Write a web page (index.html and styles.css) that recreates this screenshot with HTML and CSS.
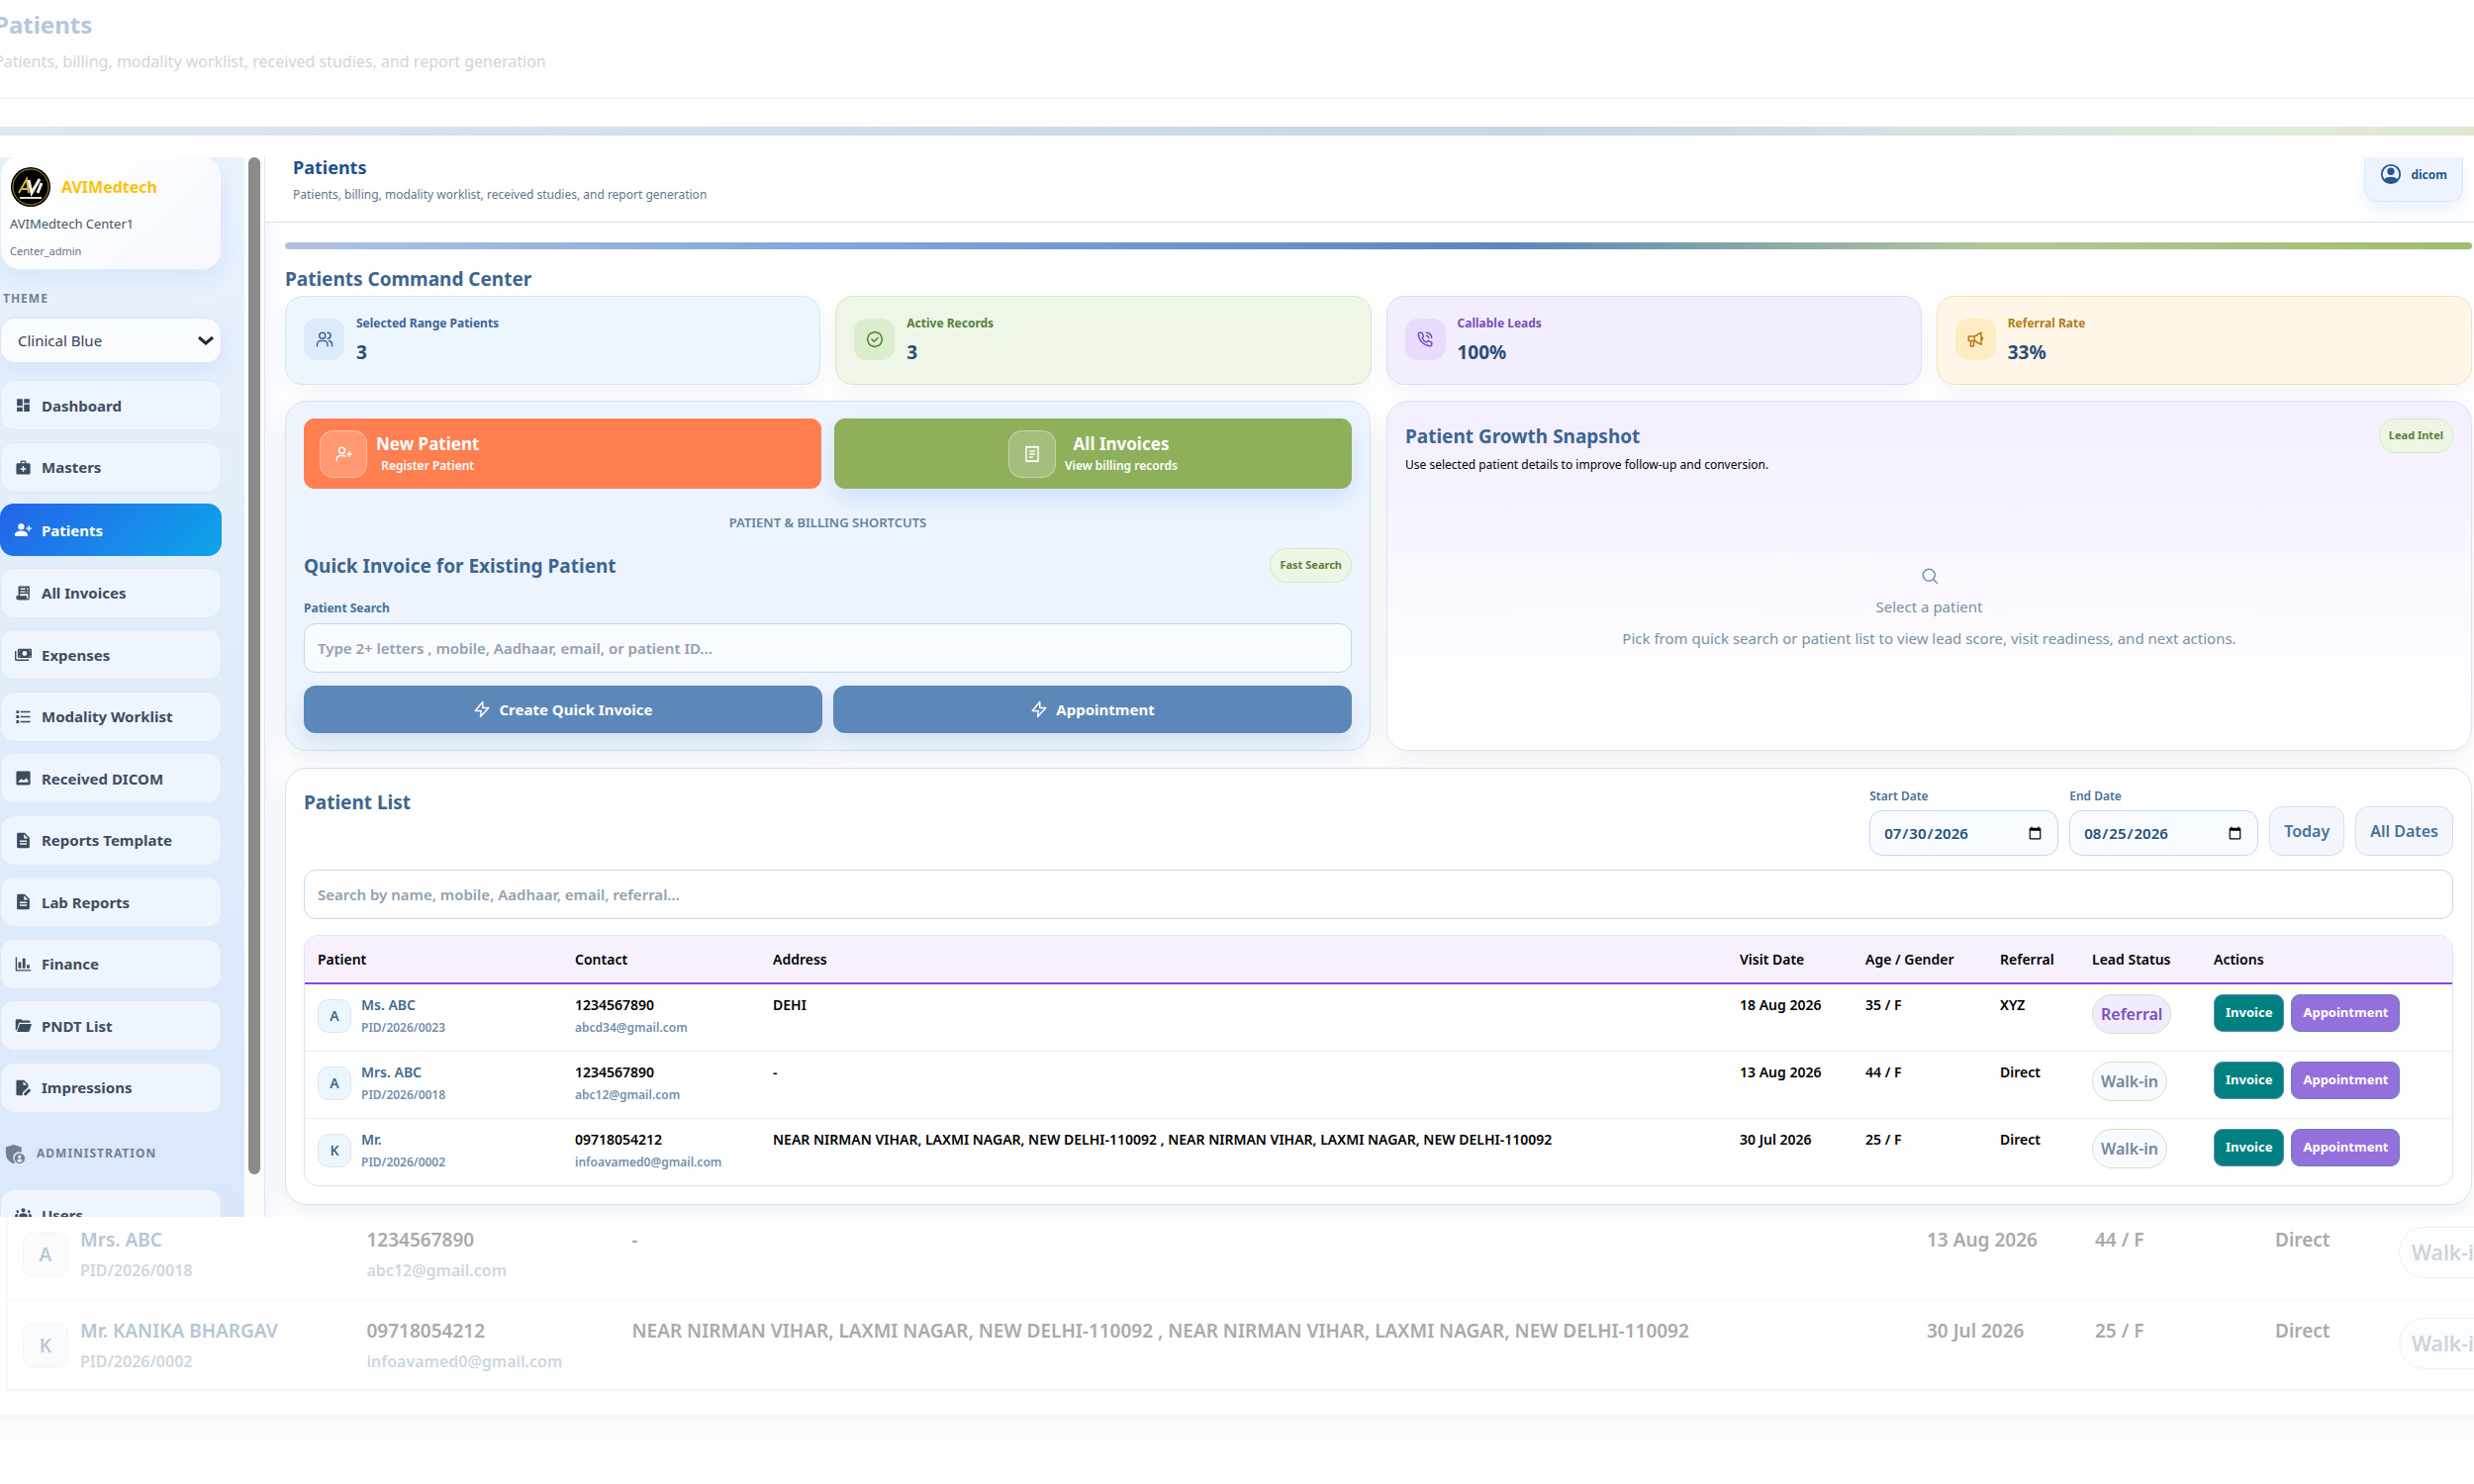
FILE: index.html
```html
<!DOCTYPE html>
<html lang="en">
<head>
    <meta charset="UTF-8">
    <meta name="viewport" content="width=device-width, initial-scale=1.0">
    <title>Patients - AVIMedtech</title>
    <link rel="stylesheet" href="styles.css">
</head>
<body>
    <!-- Icon sprite -->
    <svg class="sprite" aria-hidden="true">
        <symbol id="i-dashboard" viewBox="0 0 24 24"><path fill="currentColor" d="M3 13h8V3H3v10zm0 8h8v-6H3v6zm10 0h8V11h-8v10zm0-18v6h8V3h-8z"/></symbol>
        <symbol id="i-masters" viewBox="0 0 24 24"><path fill="currentColor" d="M20 6h-4V4c0-1.1-.9-2-2-2h-4c-1.1 0-2 .9-2 2v2H4c-1.1 0-2 .9-2 2v12c0 1.1.9 2 2 2h16c1.1 0 2-.9 2-2V8c0-1.1-.9-2-2-2zM10 4h4v2h-4V4zm6 11h-3v3h-2v-3H8v-2h3v-3h2v3h3v2z"/></symbol>
        <symbol id="i-patients" viewBox="0 0 24 24"><path fill="currentColor" d="M9 12a4.500 4.500 0 1 0 0-9 4.500 4.500 0 0 0 0 9zm0 1.500c-3.500 0-9 1.700-9 5V21h18v-2.500c0-3.300-5.500-5-9-5zM21 9V6h-2v3h-3v2h3v3h2v-3h3V9z"/></symbol>
        <symbol id="i-invoices" viewBox="0 0 24 24"><path fill="currentColor" fill-rule="evenodd" d="M5 2h16v17a3 3 0 0 1-3 3H5a3 3 0 0 1-3-3v-3h3V2zm3 3v2h7V5H8zm9 0v2h2V5h-2zm-9 4v2h7V9H8zm9 0v2h2V9h-2zM7 4v12h10v3a1 1 0 0 0 2 0V13H7z"/></symbol>
        <symbol id="i-expenses" viewBox="0 0 24 24"><path fill="currentColor" fill-rule="evenodd" d="M6 4h16a2 2 0 0 1 2 2v9a2 2 0 0 1-2 2H6a2 2 0 0 1-2-2V6a2 2 0 0 1 2-2zm8 3a3.500 3.500 0 1 0 0 7 3.500 3.500 0 0 0 0-7zM6 6v2l2-2H6zm16 0h-2l2 2V6zM6 15h2l-2-2v2zm16 0v-2l-2 2h2zM0 7h2v12h18v2H2a2 2 0 0 1-2-2V7z"/></symbol>
        <symbol id="i-worklist" viewBox="0 0 24 24"><path fill="currentColor" d="M2 3h4v4H2zM2 10h4v4H2zM2 17h4v4H2zM8 4h14v2H8zM8 11h14v2H8zM8 18h14v2H8z"/></symbol>
        <symbol id="i-image" viewBox="0 0 24 24"><path fill="currentColor" fill-rule="evenodd" d="M4 2h16a2 2 0 0 1 2 2v16a2 2 0 0 1-2 2H4a2 2 0 0 1-2-2V4a2 2 0 0 1 2-2zm1 16h14v-3l-3-3-3 3-4-2-4 4v1z"/></symbol>
        <symbol id="i-report" viewBox="0 0 24 24"><path fill="currentColor" fill-rule="evenodd" d="M5 1h9l7 7v13a2 2 0 0 1-2 2H5a2 2 0 0 1-2-2V3a2 2 0 0 1 2-2zm8 2v6h6l-6-6zM7 12v2h10v-2H7zm0 4v2h10v-2H7z"/></symbol>
        <symbol id="i-finance" viewBox="0 0 24 24"><path fill="currentColor" d="M1 2h2v18h20v2H1zM5 9h4v9H5zM11 4h4v14h-4zM17 13h4v5h-4z"/></symbol>
        <symbol id="i-folder" viewBox="0 0 24 24"><path fill="currentColor" d="M1 19V5a2 2 0 0 1 2-2h6l2 2h9a2 2 0 0 1 2 2v1H6L3 18 1 19zm2 2 4-11h17l-3 9a2 2 0 0 1-2 2H3z"/></symbol>
        <symbol id="i-impressions" viewBox="0 0 24 24"><path fill="currentColor" fill-rule="evenodd" d="M4 1h9l6 6v4l-8 8v4H4a2 2 0 0 1-2-2V3a2 2 0 0 1 2-2zm8 2v5h5l-5-5zM13 20l7-7 3 3-7 7h-3v-3z"/></symbol>
        <symbol id="i-shield" viewBox="0 0 24 24"><path fill="currentColor" fill-rule="evenodd" d="M10 1 1 4v7c0 6 4 10 9 12l2-1a7 7 0 0 1 7-12V4l-9-3zm7 10a6 6 0 1 0 0 12 6 6 0 0 0 0-12zm0 2a2 2 0 1 1 0 4 2 2 0 0 1 0-4zm-3 7c0-3 6-3 6 0-1 2-5 2-6 0z"/></symbol>
        <symbol id="i-users" viewBox="0 0 24 24"><path fill="currentColor" d="M12 3a3 3 0 1 1 0 6 3 3 0 0 1 0-6zM4 6a2 2 0 1 1 0 4 2 2 0 0 1 0-4zm16 0a2 2 0 1 1 0 4 2 2 0 0 1 0-4zM6 20v-6c0-5 12-5 12 0v6H6zM0 20v-5c0-3 2-4 4-4v9H0zm24 0v-5c0-3-2-4-4-4v9h4z"/></symbol>
        <symbol id="i-account" viewBox="0 0 24 24"><path fill="currentColor" fill-rule="evenodd" d="M12 1a11 11 0 1 0 0 22 11 11 0 0 0 0-22zm0 2a9 9 0 0 1 7 14.500c-3-3.500-11-3.500-14 0A9 9 0 0 1 12 3zm0 2a4 4 0 1 0 0 8 4 4 0 0 0 0-8z"/></symbol>
        <symbol id="i-group" viewBox="0 0 24 24"><g fill="none" stroke="currentColor" stroke-width="2" stroke-linecap="round"><circle cx="9" cy="7" r="4"/><path d="M2 21v-2a5 5 0 0 1 5-5h4a5 5 0 0 1 5 5v2M16 3a4 4 0 0 1 0 8M18 14a5 5 0 0 1 4 5v2"/></g></symbol>
        <symbol id="i-check" viewBox="0 0 24 24"><g fill="none" stroke="currentColor" stroke-width="2" stroke-linecap="round" stroke-linejoin="round"><path d="m12 2 3 1 3 1 2 2 1 3 1 3-1 3-1 3-2 2-3 1-3 1-3-1-3-1-2-2-1-3-1-3 1-3 1-3 2-2 3-1z"/><path d="m8 12 3 3 5-5"/></g></symbol>
        <symbol id="i-phone" viewBox="0 0 24 24"><g fill="none" stroke="currentColor" stroke-width="2" stroke-linecap="round" stroke-linejoin="round"><path d="M5 3h3l2 5-2 2a12 12 0 0 0 6 6l2-2 5 2v3a2 2 0 0 1-2 2A17 17 0 0 1 3 5a2 2 0 0 1 2-2z"/><path d="M14 7a4 4 0 0 1 3 3M14 3a8 8 0 0 1 7 7"/></g></symbol>
        <symbol id="i-horn" viewBox="0 0 24 24"><g fill="none" stroke="currentColor" stroke-width="2" stroke-linecap="round" stroke-linejoin="round"><path d="M3 8h8l9-5v16l-9-5H3zM11 8v6M6 14v6a1 1 0 0 0 2 1h2v-7M20 9a2 2 0 0 1 0 4"/></g></symbol>
        <symbol id="i-adduser" viewBox="0 0 24 24"><g fill="none" stroke="currentColor" stroke-width="2" stroke-linecap="round"><circle cx="10" cy="7" r="4"/><path d="M3 21v-2a5 5 0 0 1 5-5h4a5 5 0 0 1 3 1M20 9v6M17 12h6"/></g></symbol>
        <symbol id="i-bill" viewBox="0 0 24 24"><g fill="none" stroke="currentColor" stroke-width="2" stroke-linejoin="round"><path d="M4 2l2 1 2-1 2 1 2-1 2 1 2-1 2 1 2-1v20l-2-1-2 1-2-1-2 1-2-1-2 1-2-1-2 1z"/><path d="M8 8h8M8 12h8M8 16h5"/></g></symbol>
        <symbol id="i-bolt" viewBox="0 0 24 24"><path fill="none" stroke="currentColor" stroke-width="2" stroke-linejoin="round" d="M13 2 3 14h8l-1 8 11-12h-8z"/></symbol>
        <symbol id="i-search" viewBox="0 0 24 24"><g fill="none" stroke="currentColor" stroke-width="2" stroke-linecap="round"><circle cx="11" cy="11" r="8"/><path d="m17 17 5 5"/></g></symbol>
    </svg>

    <!-- Faded top strip -->
    <section class="backdrop backdrop-top" aria-hidden="true">
        <div class="backdrop-head">
            <p class="backdrop-title">Patients</p>
            <p class="backdrop-sub">Patients, billing, modality worklist, received studies, and report generation</p>
        </div>
        <div class="backdrop-bar"></div>
    </section>

    <div class="app">
        <aside class="sidebar">
            <div class="sidebar-body">
                <div class="brand">
                    <div class="brand-row">
                        <svg class="brand-logo" viewBox="0 0 42 42" aria-hidden="true">
                            <circle cx="21" cy="21" r="20" fill="#000"/>
                            <circle cx="21" cy="21" r="18" fill="none" stroke="#b8952e" stroke-width="1"/>
                            <path d="M9 27l8-14 2 14M12 23h7" fill="none" stroke="#d9ad3c" stroke-width="2"/>
                            <path d="M19 14l3 13 8-14M28 27l4-10" fill="none" stroke="#f4f1e6" stroke-width="3"/>
                            <path d="M10 32h22" stroke="#ddd" stroke-width="2"/>
                        </svg>
                        <strong class="brand-name">AVIMedtech</strong>
                    </div>
                    <p class="brand-center">AVIMedtech Center1</p>
                    <p class="brand-role">Center_admin</p>
                </div>

                <label class="theme-label" for="theme">THEME</label>
                <div class="select-wrap">
                    <select id="theme" class="theme-select">
                        <option>Clinical Blue</option>
                    </select>
                    <svg class="chevron" viewBox="0 0 16 10" aria-hidden="true"><path d="M1 2l7 6 7-6" fill="none" stroke="#1e293b" stroke-width="3"/></svg>
                </div>

                <nav class="nav">
                    <a class="nav-item" href="#"><svg><use href="#i-dashboard"/></svg>Dashboard</a>
                    <a class="nav-item" href="#"><svg><use href="#i-masters"/></svg>Masters</a>
                    <a class="nav-item active" href="#"><svg><use href="#i-patients"/></svg>Patients</a>
                    <a class="nav-item" href="#"><svg><use href="#i-invoices"/></svg>All Invoices</a>
                    <a class="nav-item" href="#"><svg><use href="#i-expenses"/></svg>Expenses</a>
                    <a class="nav-item" href="#"><svg><use href="#i-worklist"/></svg>Modality Worklist</a>
                    <a class="nav-item" href="#"><svg><use href="#i-image"/></svg>Received DICOM</a>
                    <a class="nav-item" href="#"><svg><use href="#i-report"/></svg>Reports Template</a>
                    <a class="nav-item" href="#"><svg><use href="#i-report"/></svg>Lab Reports</a>
                    <a class="nav-item" href="#"><svg><use href="#i-finance"/></svg>Finance</a>
                    <a class="nav-item" href="#"><svg><use href="#i-folder"/></svg>PNDT List</a>
                    <a class="nav-item" href="#"><svg><use href="#i-impressions"/></svg>Impressions</a>
                </nav>

                <div class="nav-admin">
                    <p class="nav-heading"><svg><use href="#i-shield"/></svg>ADMINISTRATION</p>
                    <a class="nav-item" href="#"><svg><use href="#i-users"/></svg>Users</a>
                </div>
            </div>
            <div class="scroll-track"><div class="scroll-thumb"></div></div>
        </aside>

        <div class="content">
            <header class="topbar">
                <div>
                    <h1>Patients</h1>
                    <p>Patients, billing, modality worklist, received studies, and report generation</p>
                </div>
                <button class="user-chip" type="button"><svg><use href="#i-account"/></svg>dicom</button>
            </header>

            <main>
                <div class="accent-bar"></div>
                <h2 class="page-title">Patients Command Center</h2>

                <section class="stats">
                    <article class="stat blue">
                        <span class="stat-icon"><svg><use href="#i-group"/></svg></span>
                        <div><p class="stat-label">Selected Range Patients</p><p class="stat-value">3</p></div>
                    </article>
                    <article class="stat green">
                        <span class="stat-icon"><svg><use href="#i-check"/></svg></span>
                        <div><p class="stat-label">Active Records</p><p class="stat-value">3</p></div>
                    </article>
                    <article class="stat purple">
                        <span class="stat-icon"><svg><use href="#i-phone"/></svg></span>
                        <div><p class="stat-label">Callable Leads</p><p class="stat-value">100%</p></div>
                    </article>
                    <article class="stat amber">
                        <span class="stat-icon"><svg><use href="#i-horn"/></svg></span>
                        <div><p class="stat-label">Referral Rate</p><p class="stat-value">33%</p></div>
                    </article>
                </section>

                <div class="panels">
                    <section class="panel quick">
                        <div class="shortcuts">
                            <button class="shortcut new" type="button">
                                <span class="shortcut-icon"><svg><use href="#i-adduser"/></svg></span>
                                <span class="shortcut-text"><b>New Patient</b><small>Register Patient</small></span>
                            </button>
                            <button class="shortcut invoices" type="button">
                                <span class="shortcut-icon"><svg><use href="#i-bill"/></svg></span>
                                <span class="shortcut-text"><b>All Invoices</b><small>View billing records</small></span>
                            </button>
                        </div>
                        <p class="shortcut-caption">PATIENT &amp; BILLING SHORTCUTS</p>
                        <div class="panel-head">
                            <h2>Quick Invoice for Existing Patient</h2>
                            <span class="tag">Fast Search</span>
                        </div>
                        <label class="field-label" for="patientSearch">Patient Search</label>
                        <input class="text-input" id="patientSearch" type="text" placeholder="Type 2+ letters , mobile, Aadhaar, email, or patient ID...">
                        <div class="quick-actions">
                            <button type="button"><svg><use href="#i-bolt"/></svg>Create Quick Invoice</button>
                            <button type="button"><svg><use href="#i-bolt"/></svg>Appointment</button>
                        </div>
                    </section>

                    <section class="panel growth">
                        <div class="panel-head">
                            <h2>Patient Growth Snapshot</h2>
                            <span class="tag">Lead Intel</span>
                        </div>
                        <p class="growth-sub">Use selected patient details to improve follow-up and conversion.</p>
                        <div class="empty">
                            <svg><use href="#i-search"/></svg>
                            <p>Select a patient</p>
                            <p>Pick from quick search or patient list to view lead score, visit readiness, and next actions.</p>
                        </div>
                    </section>
                </div>

                <section class="panel list">
                    <div class="list-head">
                        <h2>Patient List</h2>
                        <div class="filters">
                            <div class="date-field">
                                <label for="startDate">Start Date</label>
                                <input id="startDate" type="date" value="2026-07-30">
                            </div>
                            <div class="date-field">
                                <label for="endDate">End Date</label>
                                <input id="endDate" type="date" value="2026-08-25">
                            </div>
                            <button class="filter-btn" type="button">Today</button>
                            <button class="filter-btn" type="button">All Dates</button>
                        </div>
                    </div>
                    <input class="text-input" type="text" aria-label="Search patients" placeholder="Search by name, mobile, Aadhaar, email, referral...">
                    <div class="table-wrap">
                        <table class="patients">
                            <thead>
                                <tr>
                                    <th class="c-patient">Patient</th>
                                    <th class="c-contact">Contact</th>
                                    <th>Address</th>
                                    <th class="c-visit">Visit Date</th>
                                    <th class="c-age">Age / Gender</th>
                                    <th class="c-ref">Referral</th>
                                    <th class="c-lead">Lead Status</th>
                                    <th class="c-actions">Actions</th>
                                </tr>
                            </thead>
                            <tbody>
                                <tr>
                                    <td><div class="person"><span class="avatar">A</span><div><p class="name">Ms. ABC</p><p class="minor">PID/2026/0023</p></div></div></td>
                                    <td>1234567890<p class="minor">abcd34@gmail.com</p></td>
                                    <td>DEHI</td>
                                    <td>18 Aug 2026</td>
                                    <td>35 / F</td>
                                    <td>XYZ</td>
                                    <td><span class="status referral">Referral</span></td>
                                    <td><div class="actions"><button class="act invoice" type="button">Invoice</button><button class="act appointment" type="button">Appointment</button></div></td>
                                </tr>
                                <tr>
                                    <td><div class="person"><span class="avatar">A</span><div><p class="name">Mrs. ABC</p><p class="minor">PID/2026/0018</p></div></div></td>
                                    <td>1234567890<p class="minor">abc12@gmail.com</p></td>
                                    <td>-</td>
                                    <td>13 Aug 2026</td>
                                    <td>44 / F</td>
                                    <td>Direct</td>
                                    <td><span class="status">Walk-in</span></td>
                                    <td><div class="actions"><button class="act invoice" type="button">Invoice</button><button class="act appointment" type="button">Appointment</button></div></td>
                                </tr>
                                <tr>
                                    <td><div class="person"><span class="avatar">K</span><div><p class="name">Mr.</p><p class="minor">PID/2026/0002</p></div></div></td>
                                    <td>09718054212<p class="minor">infoavamed0@gmail.com</p></td>
                                    <td>NEAR NIRMAN VIHAR, LAXMI NAGAR, NEW DELHI-110092 , NEAR NIRMAN VIHAR, LAXMI NAGAR, NEW DELHI-110092</td>
                                    <td>30 Jul 2026</td>
                                    <td>25 / F</td>
                                    <td>Direct</td>
                                    <td><span class="status">Walk-in</span></td>
                                    <td><div class="actions"><button class="act invoice" type="button">Invoice</button><button class="act appointment" type="button">Appointment</button></div></td>
                                </tr>
                            </tbody>
                        </table>
                    </div>
                </section>
            </main>
        </div>
    </div>

    <!-- Faded bottom strip -->
    <section class="backdrop backdrop-bottom" aria-hidden="true">
        <div class="backdrop-card">
            <table class="backdrop-table">
                <tbody>
                    <tr>
                        <td class="b-patient"><div class="person"><span class="avatar">A</span><div><p class="name">Mrs. ABC</p><p class="minor">PID/2026/0018</p></div></div></td>
                        <td class="b-contact">1234567890<p class="minor">abc12@gmail.com</p></td>
                        <td>-</td>
                        <td class="b-visit">13 Aug 2026</td>
                        <td class="b-age">44 / F</td>
                        <td class="b-ref">Direct</td>
                        <td class="b-lead"><span class="status">Walk-in</span></td>
                    </tr>
                    <tr>
                        <td><div class="person"><span class="avatar">K</span><div><p class="name">Mr. KANIKA BHARGAV</p><p class="minor">PID/2026/0002</p></div></div></td>
                        <td>09718054212<p class="minor">infoavamed0@gmail.com</p></td>
                        <td>NEAR NIRMAN VIHAR, LAXMI NAGAR, NEW DELHI-110092 , NEAR NIRMAN VIHAR, LAXMI NAGAR, NEW DELHI-110092</td>
                        <td>30 Jul 2026</td>
                        <td>25 / F</td>
                        <td>Direct</td>
                        <td><span class="status">Walk-in</span></td>
                    </tr>
                </tbody>
            </table>
        </div>
    </section>
</body>
</html>
```
FILE: styles.css
```css
* {
    box-sizing: border-box;
}
body {
    margin: 0;
    min-height: 100vh;
    display: flex;
    flex-direction: column;
    font-family: "Noto Sans", "Open Sans", sans-serif;
    font-size: 14px;
    line-height: 20px;
    color: #000;
    background-color: #fefefe;
    overflow-x: hidden;
}
h1, h2, p {
    margin: 0;
}
button, input, select {
    font-family: inherit;
}
button {
    cursor: pointer;
}
a {
    text-decoration: none;
}
.sprite {
    position: absolute;
    width: 0;
    height: 0;
}

/* faded strips above and below the app */
.backdrop {
    overflow: hidden;
}
.backdrop-top {
    padding-bottom: 22px;
}
.backdrop-head {
    padding: 8px 0 24px;
    margin-left: -6px;
    border-bottom: 2px solid #f4f7fb;
    white-space: nowrap;
}
.backdrop-title {
    font-size: 24px;
    line-height: 34px;
    font-weight: 700;
    color: #b5c6dd;
}
.backdrop-sub {
    margin-top: 8px;
    font-size: 16px;
    line-height: 24px;
    color: #d0d5de;
}
.backdrop-bar {
    height: 9px;
    margin-top: 28px;
    background: linear-gradient(90deg, #e0e7f1, #d0deef 30%, #c8d7e8 62%, #e3ebdb 92%, #dfe8cf);
}

.app {
    display: flex;
    background-color: #fff;
}

/* sidebar */
.sidebar {
    flex: 0 0 268px;
    display: flex;
    overflow: hidden;
    border-right: 1px solid #dbe6f5;
}
.sidebar-body {
    flex: 1;
    display: flex;
    flex-direction: column;
    padding-right: 23px;
    overflow: hidden;
    background: linear-gradient(180deg, #eaf2fd, #e2edfb 40%, #dbe8fb);
}
.brand {
    margin-top: -2px;
    padding: 10px 9px 8px;
    border: 1px solid #e3ecf7;
    border-radius: 20px;
    background: linear-gradient(135deg, #fff, #f5f9fe);
    box-shadow: 0 8px 20px rgba(59, 130, 246, 0.1);
}
.brand-row {
    display: flex;
    align-items: center;
    gap: 10px;
}
.brand-logo {
    width: 42px;
    height: 42px;
}
.brand-name {
    font-size: 16px;
    color: #ffc107;
}
.brand-center {
    margin-top: 6px;
    font-size: 13px;
    color: #475569;
}
.brand-role {
    margin-top: 8px;
    font-size: 11px;
    color: #64748b;
}
.theme-label {
    margin: 19px 0 9px 3px;
    font-size: 12px;
    font-weight: 700;
    letter-spacing: 1px;
    color: #718096;
}
.select-wrap {
    position: relative;
}
.theme-select {
    width: 100%;
    height: 46px;
    padding: 0 17px;
    appearance: none;
    border: 1px solid #dde7f3;
    border-radius: 15px;
    font-size: 15px;
    color: #334155;
    background-color: #f9fcff;
    box-shadow: 0 8px 20px rgba(59, 130, 246, 0.1);
}
.chevron {
    position: absolute;
    right: 8px;
    top: 18px;
    width: 16px;
    height: 10px;
    pointer-events: none;
}
.nav {
    flex: 1;
    display: flex;
    flex-direction: column;
    justify-content: space-between;
    gap: 8px;
    margin-top: 17px;
}
.nav-item {
    display: flex;
    align-items: center;
    gap: 10px;
    height: 51px;
    padding: 0 14px;
    border: 1px solid #e0e8f3;
    border-radius: 14px;
    font-size: 15px;
    font-weight: 700;
    color: #3e4c60;
    background-color: #eef5fe;
}
.nav-item svg {
    width: 17px;
    height: 17px;
    flex: none;
}
.nav-item.active {
    height: 53px;
    border-color: transparent;
    color: #fff;
    background: linear-gradient(135deg, #2563eb, #0ea5e9) border-box;
}
.nav-admin {
    margin-bottom: -23px;
    padding-top: 26px;
}
.nav-heading {
    display: flex;
    align-items: center;
    gap: 11px;
    margin-bottom: 21px;
    padding: 4px 5px;
    font-size: 12px;
    line-height: 22px;
    font-weight: 700;
    letter-spacing: 1px;
    color: #718096;
}
.nav-heading svg {
    width: 21px;
    height: 21px;
}
.scroll-track {
    width: 20px;
    padding: 0 4px 43px;
    background-color: #fcfcfc;
}
.scroll-thumb {
    height: 100%;
    border-radius: 6px;
    background-color: #8b8b8b;
}

/* top bar */
.content {
    flex: 1;
    min-width: 0;
}
.topbar {
    display: flex;
    justify-content: space-between;
    align-items: flex-start;
    padding: 0 11px 17px 28px;
    border-bottom: 1px solid #d6e2ee;
}
.topbar h1 {
    font-size: 18px;
    line-height: 20px;
    font-weight: 700;
    color: #1e4f8f;
}
.topbar p {
    margin-top: 8px;
    font-size: 12px;
    color: #64748b;
}
.user-chip {
    display: flex;
    align-items: center;
    gap: 9px;
    height: 45px;
    padding: 0 15px 10px;
    border: 1px solid #dbe8fa;
    border-top: 0;
    border-radius: 0 0 13px 13px;
    font-size: 12px;
    font-weight: 700;
    color: #2b5591;
    background-color: #edf4ff;
    box-shadow: 0 8px 18px rgba(59, 130, 246, 0.1);
}
.user-chip svg {
    width: 22px;
    height: 22px;
}

main {
    padding: 20px 2px 12px 20px;
    background: linear-gradient(90deg, #f5f8ff, #fff 24px);
}
.accent-bar {
    height: 7px;
    border-radius: 4px;
    background: linear-gradient(90deg, #afc3df, #7da3d8 28%, #5a88ba 56%, #b2c798 78%, #a0bd6c);
}
.page-title {
    margin: 16px 0 3px;
}
h2 {
    font-size: 19px;
    line-height: 28px;
    font-weight: 700;
    color: #3c6590;
}

/* stat cards */
.stats {
    display: grid;
    grid-template-columns: repeat(4, 1fr);
    gap: 15px;
}
.stat {
    display: flex;
    align-items: center;
    gap: 12px;
    padding: 17px 18px 19px;
    border: 1px solid;
    border-radius: 18px;
    box-shadow: 0 8px 20px rgba(30, 60, 100, 0.05);
}
.stat-icon {
    display: flex;
    align-items: center;
    justify-content: center;
    width: 41px;
    height: 42px;
    border-radius: 13px;
}
.stat-icon svg {
    width: 18px;
    height: 18px;
}
.stat-label {
    font-size: 12px;
    font-weight: 700;
}
.stat-value {
    margin-top: 6px;
    font-size: 19px;
    line-height: 26px;
    font-weight: 700;
    color: #2b4d78;
}
.stat.blue {
    color: #3d659a;
    border-color: #d7e6f6;
    background-color: #edf5fd;
}
.blue .stat-icon {
    background-color: #dceafb;
}
.stat.green {
    color: #55803a;
    border-color: #d7eac4;
    background-color: #eef6e7;
}
.green .stat-icon {
    background-color: #dcedce;
}
.stat.purple {
    color: #7552b8;
    border-color: #e4d9fb;
    background-color: #f3eefd;
}
.purple .stat-icon {
    background-color: #e7dcfd;
}
.stat.amber {
    color: #b27c17;
    border-color: #f8e2ac;
    background-color: #fff6e8;
}
.amber .stat-icon {
    background-color: #feedc4;
}

/* panels */
.panels {
    display: grid;
    grid-template-columns: 1fr 1fr;
    gap: 16px;
    margin: 16px 0 17px;
}
.panel {
    padding: 17px 18px;
    border: 1px solid #d5e4f2;
    border-radius: 22px;
    box-shadow: 0 10px 24px rgba(30, 60, 100, 0.07);
}
.quick {
    background-color: #edf4fd;
}
.growth {
    display: flex;
    flex-direction: column;
    border-color: #e5dbfb;
    background: linear-gradient(180deg, #f3eefe, #fff 90%);
}
.shortcuts {
    display: grid;
    grid-template-columns: 1fr 1fr;
    gap: 13px;
}
.shortcut {
    display: flex;
    align-items: center;
    gap: 9px;
    height: 71px;
    padding: 0 16px;
    border: 0;
    border-radius: 11px;
    color: #fff;
}
.shortcut.new {
    background-color: #ff7f50;
}
.shortcut.invoices {
    justify-content: center;
    background-color: #8eb05b;
    box-shadow: 0 10px 24px rgba(59, 130, 246, 0.16);
}
.shortcut-icon {
    display: flex;
    align-items: center;
    justify-content: center;
    width: 48px;
    height: 48px;
    border: 1px solid rgba(255, 255, 255, 0.35);
    border-radius: 14px;
    background-color: rgba(255, 255, 255, 0.2);
}
.shortcut-icon svg {
    width: 18px;
    height: 18px;
}
.shortcut-text b {
    display: block;
    font-size: 17px;
    line-height: 24px;
}
.shortcut-text small {
    display: block;
    font-size: 12px;
    line-height: 20px;
    font-weight: 600;
}
.shortcut-caption {
    margin: 24px 0 16px;
    text-align: center;
    font-size: 13px;
    font-weight: 600;
    color: #64829f;
}
.panel-head {
    display: flex;
    justify-content: space-between;
    align-items: center;
}
.tag {
    padding: 7px 9px 8px;
    border: 1px solid #d6eac2;
    border-radius: 18px;
    font-size: 11px;
    line-height: 18px;
    font-weight: 700;
    color: #5a8038;
    background-color: #edf6e5;
}
.field-label {
    display: block;
    margin: 16px 0 5px;
    font-size: 12px;
    font-weight: 700;
    color: #4b7096;
}
.text-input {
    display: block;
    width: 100%;
    height: 50px;
    padding: 0 13px;
    border: 1px solid #c3d8ee;
    border-radius: 12px;
    font-size: 15px;
    font-weight: 600;
    color: #2b4d78;
    background-color: #f8fbff;
}
.text-input::placeholder {
    color: #91a0b1;
    opacity: 1;
}
.quick-actions {
    display: grid;
    grid-template-columns: 1fr 1fr;
    gap: 11px;
    margin-top: 13px;
}
.quick-actions button {
    display: flex;
    align-items: center;
    justify-content: center;
    gap: 8px;
    height: 48px;
    border: 0;
    border-radius: 12px;
    font-size: 15px;
    font-weight: 700;
    color: #fff;
    background-color: #5b88b9;
    box-shadow: 0 10px 20px rgba(91, 136, 185, 0.16);
}
.quick-actions svg {
    width: 18px;
    height: 18px;
}
.growth-sub {
    margin-top: 2px;
    font-size: 12px;
}
.empty {
    flex: 1;
    display: flex;
    flex-direction: column;
    align-items: center;
    justify-content: center;
    gap: 12px;
    padding-top: 6px;
    color: #7890a9;
    font-size: 15px;
}
.empty svg {
    width: 18px;
    height: 18px;
}

/* patient list */
.list {
    padding-top: 20px;
    padding-bottom: 18px;
    background-color: #fff;
}
.list .text-input {
    background-color: #fff;
}
.list-head {
    display: flex;
    justify-content: space-between;
    margin-bottom: 14px;
}
.filters {
    display: flex;
    align-items: flex-end;
    gap: 11px;
}
.date-field label {
    display: block;
    margin-bottom: 6px;
    font-size: 12px;
    line-height: 16px;
    font-weight: 600;
    color: #4b7096;
}
.date-field input {
    display: block;
    width: 191px;
    height: 46px;
    padding: 0 13px;
    border: 1px solid #c3d8ee;
    border-radius: 13px;
    font-size: 15px;
    font-weight: 600;
    color: #254e78;
    background-color: #f8fbff;
}
.filter-btn {
    height: 50px;
    padding: 0 14px;
    border: 1px solid #cfdff0;
    border-radius: 13px;
    font-size: 16px;
    font-weight: 600;
    color: #47709b;
    background-color: #f3f7fd;
}
.table-wrap {
    margin-top: 16px;
    border: 1px solid #d9e6f2;
    border-radius: 14px;
    overflow: hidden;
}
.patients, .backdrop-table {
    width: 100%;
    table-layout: fixed;
    border-collapse: collapse;
    font-weight: 600;
}
.patients th {
    height: 48px;
    padding: 0 0 0 13px;
    text-align: left;
    font-size: 14px;
    font-weight: 600;
    background-color: #f8f1fd;
    border-bottom: 2px solid #8b45e6;
}
.patients td {
    height: 68px;
    padding: 10px 0 10px 13px;
    vertical-align: top;
    font-size: 14px;
    line-height: 22px;
    border-bottom: 1px solid #eaf0f7;
}
.patients tr:last-child td {
    border-bottom: 0;
}
.c-patient {
    width: 260px;
}
.c-contact {
    width: 200px;
}
.c-visit {
    width: 127px;
}
.c-age {
    width: 136px;
}
.c-ref {
    width: 93px;
}
.c-lead {
    width: 123px;
}
.c-actions {
    width: 254px;
}
.person {
    display: flex;
    gap: 10px;
}
.avatar {
    display: flex;
    align-items: center;
    justify-content: center;
    width: 34px;
    height: 34px;
    margin-top: 5px;
    border: 1px solid #d9e7f5;
    border-radius: 11px;
    color: #41698f;
    background-color: #edf5fd;
}
.name {
    color: #41698f;
}
.minor {
    font-size: 12px;
    line-height: 24px;
    color: #7390ac;
}
.status {
    display: inline-block;
    padding: 8px 8px;
    border: 1px solid #d3e5bd;
    border-radius: 20px;
    font-size: 16px;
    color: #75879d;
    background-color: #f7fafe;
}
.status.referral {
    color: #7552b8;
    background-color: #f1ebfd;
}
.actions {
    display: flex;
    gap: 7px;
}
.act {
    height: 38px;
    padding: 0 11px 2px;
    border: 1px solid #5b88b9;
    border-radius: 9px;
    font-size: 13px;
    font-weight: 700;
    color: #fff;
}
.act.invoice {
    background-color: #008080;
}
.act.appointment {
    background-color: #9370db;
}

/* bottom strip */
.backdrop-bottom {
    flex: 1;
    background: linear-gradient(180deg, #f9fbfb 200px, #fefefe 250px);
}
.backdrop-card {
    padding: 0 0 24px 6px;
    border-bottom: 2px solid #f4f7fa;
    background-color: #fefefe;
}
.backdrop-table {
    width: calc(100% + 60px);
    margin-top: -7px;
    border-left: 1px solid #f0f4f9;
    border-bottom: 2px solid #f1f5f9;
    color: #aaa;
}
.backdrop-table td {
    height: 91px;
    padding: 17px 0 0 16px;
    vertical-align: top;
    font-size: 19px;
    line-height: 26px;
}
.backdrop-table tr + tr td {
    border-top: 1px solid #f5f7fa;
}
.backdrop-table .person {
    gap: 12px;
}
.backdrop-table .avatar {
    width: 46px;
    height: 46px;
    margin-top: 5px;
    border-color: #f1f6fb;
    color: #b9c8d7;
    background-color: #f9fbfd;
}
.backdrop-table .name {
    color: #b6c6d6;
}
.backdrop-table .minor {
    margin-top: 4px;
    font-size: 16px;
    line-height: 28px;
    color: #cdd7e1;
}
.backdrop-table .status {
    padding: 12px;
    border-color: #eef5e6;
    border-radius: 26px;
    font-size: 21px;
    color: #cdd4dd;
    background-color: #fcfdfe;
}
.b-patient {
    width: 348px;
}
.b-contact {
    width: 268px;
}
.b-visit {
    width: 170px;
}
.b-age {
    width: 182px;
}
.b-ref {
    width: 125px;
}
.b-lead {
    width: 152px;
}
```
